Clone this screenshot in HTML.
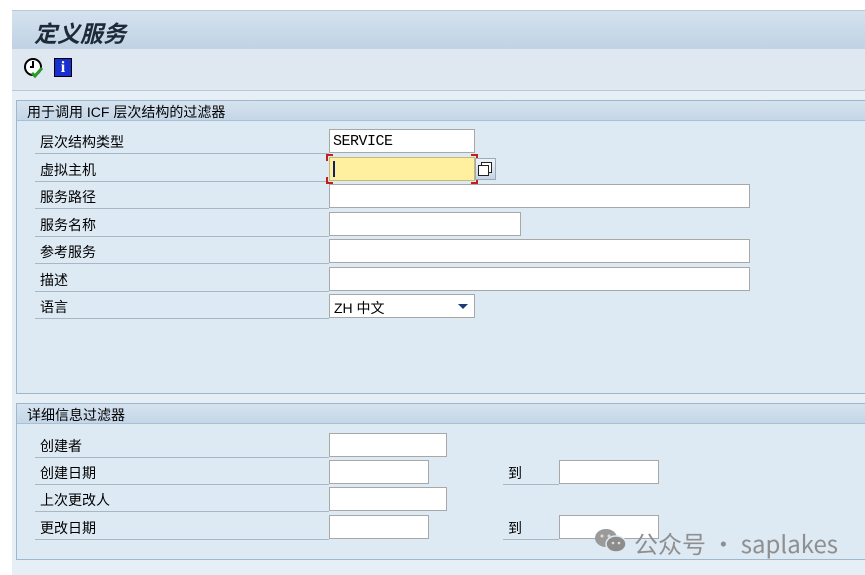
<!DOCTYPE html>
<html><head><meta charset="utf-8"><style>
body{margin:0;width:865px;height:575px;background:#fff;position:relative;overflow:hidden;font-family:"Liberation Sans","Noto Sans CJK SC",sans-serif;font-size:14px;color:#000}
.a{position:absolute}
.frame{left:12px;top:10px;width:853px;height:565px;background:#e6eef6}
.title{left:12px;top:10px;width:853px;height:38px;background:linear-gradient(#d5e2ef,#c0d2e4);border-top:1px solid #b8c9da;border-bottom:1px solid #b0c4d8}
.title span{position:absolute;left:22px;top:4px;font-size:23px;font-style:italic;font-weight:bold;color:#1e2a38}
.tb{left:12px;top:49px;width:853px;height:41px;background:#dfe8f1;border-bottom:1px solid #b8c9da}
.grp{left:16px;background:#dde9f3;border:1px solid #9fb7cd;width:860px}
.gh{position:absolute;left:0;top:0;right:0;height:19px;background:linear-gradient(#d6e3ef,#c4d6e7);border-bottom:1px solid #a9bfd4}
.gh span{position:absolute;left:10px;top:1px;font-size:14px}
.lbl{position:absolute;left:40px;font-size:14px}
.ul{position:absolute;left:35px;width:294px;height:1px;background:#a9b7c4}
.in{position:absolute;background:#fff;border:1px solid #a8a8a8;box-sizing:border-box;height:24px}
</style></head><body>
<div class="a frame"></div>
<div class="a title"><span>定义服务</span></div>
<div class="a tb">
<svg class="a" style="left:11px;top:8px" width="22" height="22" viewBox="0 0 22 22"><circle cx="10" cy="10" r="8" fill="#fff" stroke="#000" stroke-width="2"/><path d="M10 4v6h-3" stroke="#000" stroke-width="2" fill="none"/><path d="M9 16l3 3 7-8" stroke="#2a9a2a" stroke-width="3" fill="none"/></svg>
<div class="a" style="left:42px;top:9px;width:18px;height:19px;background:#1a2fd0;border:1px solid #000;box-sizing:border-box;color:#fff;font:bold 16px 'Liberation Serif',serif;text-align:center;line-height:18px">i</div>
</div>

<div class="a grp" style="top:100px;height:292px">
<div class="gh"><span>用于调用 ICF 层次结构的过滤器</span></div>
</div>
<div class="lbl" style="top:132px">层次结构类型</div><div class="ul" style="top:153px"></div>
<div class="lbl" style="top:160px">虚拟主机</div><div class="ul" style="top:181px"></div>
<div class="lbl" style="top:187px">服务路径</div><div class="ul" style="top:208px"></div>
<div class="lbl" style="top:215px">服务名称</div><div class="ul" style="top:236px"></div>
<div class="lbl" style="top:242px">参考服务</div><div class="ul" style="top:263px"></div>
<div class="lbl" style="top:270px">描述</div><div class="ul" style="top:291px"></div>
<div class="lbl" style="top:297px">语言</div><div class="ul" style="top:318px"></div>

<div class="in" style="left:329px;top:129px;width:146px;font-family:'Liberation Mono',monospace;font-size:15px;padding:3px 3px;letter-spacing:-0.5px">SERVICE</div>
<div class="in" style="left:329px;top:157px;width:146px;background:#fff0a0;border-color:#c8b870"></div>
<div class="a" style="left:333px;top:161px;width:2px;height:16px;background:#102060"></div>
<div class="a" style="left:326px;top:154px;width:5px;height:5px;border-left:2px solid #c02020;border-top:2px solid #c02020"></div>
<div class="a" style="left:471px;top:154px;width:5px;height:5px;border-right:2px solid #c02020;border-top:2px solid #c02020"></div>
<div class="a" style="left:326px;top:177px;width:5px;height:5px;border-left:2px solid #c02020;border-bottom:2px solid #c02020"></div>
<div class="a" style="left:471px;top:177px;width:5px;height:5px;border-right:2px solid #c02020;border-bottom:2px solid #c02020"></div>
<div class="a" style="left:475px;top:158px;width:21px;height:22px;background:linear-gradient(#eef3f8,#c6d4e2);border:1px solid #9aabbc;box-sizing:border-box"></div>
<div class="a" style="left:481px;top:162px;width:9px;height:9px;border:1.5px solid #222;background:#fff"></div>
<div class="a" style="left:478px;top:165px;width:9px;height:9px;border:1.5px solid #222;background:#fff"></div>
<div class="in" style="left:329px;top:184px;width:421px"></div>
<div class="in" style="left:329px;top:212px;width:192px"></div>
<div class="in" style="left:329px;top:239px;width:421px"></div>
<div class="in" style="left:329px;top:267px;width:421px"></div>
<div class="in" style="left:329px;top:294px;width:146px;padding:3px 4px;font-size:14px">ZH 中文<span style="position:absolute;right:6px;top:9px;border-left:5px solid transparent;border-right:5px solid transparent;border-top:5px solid #1a3a7a"></span></div>

<div class="a grp" style="top:403px;height:155px">
<div class="gh"><span>详细信息过滤器</span></div>
</div>
<div class="lbl" style="top:436px">创建者</div><div class="ul" style="top:457px"></div>
<div class="lbl" style="top:463px">创建日期</div><div class="ul" style="top:484px"></div>
<div class="lbl" style="top:490px">上次更改人</div><div class="ul" style="top:511px"></div>
<div class="lbl" style="top:518px">更改日期</div><div class="ul" style="top:539px"></div>
<div class="in" style="left:329px;top:433px;width:118px"></div>
<div class="in" style="left:329px;top:460px;width:100px"></div>
<div class="in" style="left:329px;top:487px;width:118px"></div>
<div class="in" style="left:329px;top:515px;width:100px"></div>
<div class="lbl" style="left:508px;top:463px">到</div><div class="a" style="left:503px;top:484px;width:56px;height:1px;background:#a9b7c4"></div>
<div class="lbl" style="left:508px;top:518px">到</div><div class="a" style="left:503px;top:539px;width:56px;height:1px;background:#a9b7c4"></div>
<div class="in" style="left:559px;top:460px;width:100px"></div>
<div class="in" style="left:559px;top:515px;width:100px"></div>

<svg class="a" style="left:594px;top:527px" width="34" height="28" viewBox="0 0 34 28"><ellipse cx="12" cy="11" rx="11" ry="9" fill="#9a9a9a"/><ellipse cx="22" cy="17" rx="10" ry="8" fill="#8c8c8c" stroke="#dde9f3" stroke-width="1.5"/><circle cx="8" cy="9" r="1.5" fill="#ddd"/><circle cx="15" cy="9" r="1.5" fill="#ddd"/><circle cx="19" cy="16" r="1.3" fill="#ddd"/><circle cx="25" cy="16" r="1.3" fill="#ddd"/></svg>
<div class="a" style="left:634px;top:525px;font-size:24px;color:#8f8f8f;font-family:'Noto Sans CJK SC','Liberation Sans',sans-serif">公众号 · saplakes</div>
</body></html>
